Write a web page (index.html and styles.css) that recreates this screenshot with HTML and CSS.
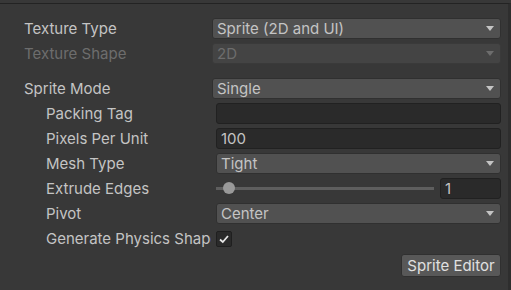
FILE: index.html
```html
<!DOCTYPE html>
<html lang="en">
<head>
  <meta charset="UTF-8"/>
  <title>Texture Import Settings</title>
  <link rel="stylesheet" href="styles.css">
</head>
<body>
<div class="inspector">
  <div class="row">
    <span class="label">Texture Type</span>
    <div class="dropdown">Sprite (2D and UI)<span class="arrow"></span></div>
  </div>
  <div class="row disabled">
    <span class="label">Texture Shape</span>
    <div class="dropdown">2D<span class="arrow"></span></div>
  </div>
  <div class="row section">
    <span class="label">Sprite Mode</span>
    <div class="dropdown">Single<span class="arrow"></span></div>
  </div>
  <div class="row sub">
    <span class="label">Packing Tag</span>
    <div class="field"></div>
  </div>
  <div class="row sub">
    <span class="label">Pixels Per Unit</span>
    <div class="field">100</div>
  </div>
  <div class="row sub">
    <span class="label">Mesh Type</span>
    <div class="dropdown">Tight<span class="arrow"></span></div>
  </div>
  <div class="row sub">
    <span class="label">Extrude Edges</span>
    <div class="slider">
      <div class="track"><span class="thumb"></span></div>
      <div class="field num">1</div>
    </div>
  </div>
  <div class="row sub">
    <span class="label">Pivot</span>
    <div class="dropdown">Center<span class="arrow"></span></div>
  </div>
  <div class="row sub">
    <span class="label">Generate Physics Shape</span>
    <div class="checkbox">
      <svg width="12" height="12" viewBox="0 0 12 12"><path d="M2 6.5 L4.8 9 L10 3" fill="none" stroke="#e6e6e6" stroke-width="1.8"/></svg>
    </div>
  </div>
  <div class="actions">
    <button class="btn">Sprite Editor</button>
  </div>
</div>
</body>
</html>
```

FILE: styles.css
```css
* { box-sizing: border-box; margin:0; padding:0; }
body { background:#383838; font-family: Inter, "Noto Sans", sans-serif; font-size:15px; color:#c4c4c4; padding-top:3px; height:290px; overflow:hidden; }
.inspector { border-top:1px solid #232323; border-right:3px solid #2e2e2e; height:287px; padding:12px 7px 0 24px; }
.row { display:flex; align-items:center; height:25px; }
.row.section { margin-top:10px; }
.label { width:188px; flex:none; white-space:nowrap; overflow:hidden; }
.row.sub { padding-left:22px; }
.row.sub .label { width:165px; margin-right:5px; }
.disabled { color:#6d6d6d; }
.dropdown { position:relative; flex:1; height:21px; line-height:19px; padding-left:4px; background:#515151; border:1px solid #303030; border-radius:3px; }
.disabled .dropdown { background:#444; border-color:#3a3a3a; }
.arrow { position:absolute; right:6px; top:7px; width:0; height:0; border-left:4px solid transparent; border-right:4px solid transparent; border-top:5px solid #c4c4c4; }
.disabled .arrow { border-top-color:#6d6d6d; }
.field { flex:1; height:21px; line-height:19px; padding-left:4px; background:#2a2a2a; border:1px solid #212121; border-radius:3px; }
.slider { flex:1; display:flex; align-items:center; }
.track { position:relative; flex:1; height:3px; background:#5e5e5e; margin-right:6px; }
.thumb { position:absolute; left:7px; top:-5px; width:12px; height:12px; border-radius:50%; background:#999; }
.field.num { flex:none; width:61px; }
.checkbox { width:16px; height:16px; background:#2a2a2a; border:1px solid #1f1f1f; border-radius:2px; display:flex; align-items:center; justify-content:center; }
.actions { display:flex; justify-content:flex-end; margin-top:3px; }
.btn { font:inherit; color:#e0e0e0; background:#585858; border:1px solid #303030; border-radius:3px; height:23px; padding:0 4px; width:100px; }
```
